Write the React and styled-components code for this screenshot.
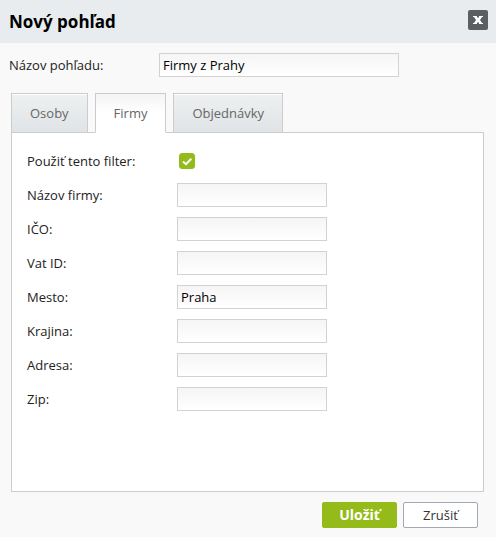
import React, { useState } from 'react';
import styled, { createGlobalStyle } from 'styled-components';

const tabs = ['Osoby', 'Firmy', 'Objednávky'];

const fields = [
    { id: 'company', label: 'Názov firmy:' },
    { id: 'ico', label: 'IČO:' },
    { id: 'vat', label: 'Vat ID:' },
    { id: 'city', label: 'Mesto:', value: 'Praha' },
    { id: 'country', label: 'Krajina:' },
    { id: 'address', label: 'Adresa:' },
    { id: 'zip', label: 'Zip:' },
];

export default function App() {
    const [active, setActive] = useState('Firmy');

    return (
        <>
            <GlobalStyle />
            <Dialog role="dialog" aria-labelledby="dialog-title">
                <Header>
                    <Title id="dialog-title">Nový pohľad</Title>
                    <CloseButton type="button" aria-label="Zrušiť">
                        <svg width="10" height="8" viewBox="0 0 10 8">
                            <path
                                d="M0 0H4V1L5 2L6 1V0H10V1H9L7 4L9 7H10V8H6V7L5 6L4 7V8H0V7H1L3 4L1 1H0Z"
                                fill="#fff"
                            />
                        </svg>
                    </CloseButton>
                </Header>

                <NameRow>
                    <Label htmlFor="name">Názov pohľadu:</Label>
                    <TextInput id="name" $width="240px" defaultValue="Firmy z Prahy" />
                </NameRow>

                <TabList role="tablist">
                    {tabs.map(tab => (
                        <Tab
                            key={tab}
                            type="button"
                            role="tab"
                            aria-selected={tab === active}
                            $active={tab === active}
                            onClick={() => setActive(tab)}
                        >
                            {tab}
                        </Tab>
                    ))}
                </TabList>

                <Panel role="tabpanel" aria-label={active}>
                    <FieldRow>
                        <Label htmlFor="use-filter">Použiť tento filter:</Label>
                        <CheckBox id="use-filter" type="checkbox" defaultChecked />
                        <CheckMark viewBox="0 0 16 16" aria-hidden="true">
                            <path d="M4 8.5L7 11.2L12.3 5.7" />
                        </CheckMark>
                    </FieldRow>
                    {fields.map(({ id, label, value }) => (
                        <FieldRow key={id}>
                            <Label htmlFor={id}>{label}</Label>
                            <TextInput id={id} $width="150px" defaultValue={value} />
                        </FieldRow>
                    ))}
                </Panel>

                <Footer>
                    <ActionButton type="submit" $primary>Uložiť</ActionButton>
                    <ActionButton type="button">Zrušiť</ActionButton>
                </Footer>
            </Dialog>
        </>
    );
}

const GlobalStyle = createGlobalStyle`
    * {
        box-sizing: border-box;
    }
    body {
        margin: 0;
        background: #f9f9f9;
        color: #222;
        font-family: 'Open Sans', sans-serif;
        font-size: 13px;
        line-height: 18px;
    }
    button, input {
        font: inherit;
    }
`;

const Dialog = styled.form`
    display: flex;
    flex-direction: column;
`;

const Header = styled.header`
    display: flex;
    align-items: center;
    justify-content: space-between;
    padding: 10px 8px 9px 9px;
    background: #e8ecef;
`;

const Title = styled.h1`
    margin: 0;
    color: #000;
    font-size: 17px;
    line-height: 24px;
`;

const CloseButton = styled.button`
    display: flex;
    align-items: center;
    justify-content: center;
    align-self: flex-start;
    width: 20px;
    height: 20px;
    padding: 0;
    border: 0;
    border-radius: 2px;
    background: #5b5f62;
    cursor: pointer;
`;

const NameRow = styled.div`
    display: grid;
    grid-template-columns: 150px 1fr;
    align-items: center;
    padding: 10px 9px 16px;
`;

const Label = styled.label`
    white-space: nowrap;
`;

const TextInput = styled.input`
    width: ${({ $width }) => $width};
    height: 24px;
    padding: 0 3px;
    border: 1px solid #d2d2d2;
    border-radius: 0;
    background: linear-gradient(#f5f5f5, #fff);
    color: #000;
`;

const TabList = styled.div`
    display: flex;
    gap: 7px;
    padding: 0 11px;
`;

const Tab = styled.button`
    position: relative;
    height: 40px;
    margin-bottom: -1px;
    padding: 0 18px;
    border: 1px solid #ccc;
    border-bottom-color: ${({ $active }) => ($active ? '#fff' : '#ccc')};
    background: ${({ $active }) =>
        $active ? 'linear-gradient(#f4f4f4, #fff 50%)' : 'linear-gradient(#eef0f1, #e0e4e6)'};
    box-shadow: ${({ $active }) => ($active ? 'none' : 'inset 0 1px #fff')};
    color: #666;
    cursor: pointer;
`;

const Panel = styled.section`
    display: flex;
    flex-direction: column;
    gap: 10px;
    min-height: 360px;
    margin: 0 12px 0 11px;
    padding: 16px 15px;
    border: 1px solid #ccc;
    background: #fff;
`;

const FieldRow = styled.div`
    display: grid;
    grid-template-columns: 150px 1fr;
    align-items: center;
    min-height: 24px;
`;

const CheckBox = styled.input`
    grid-area: 1 / 2;
    appearance: none;
    width: 16px;
    height: 16px;
    margin: 0 2px;
    border: 1px solid #d2d2d2;
    border-radius: 3px;
    cursor: pointer;

    &:checked {
        border-color: #95bb1a;
        background: #95bb1a;
    }
`;

const CheckMark = styled.svg`
    grid-area: 1 / 2;
    width: 16px;
    height: 16px;
    margin: 0 2px;
    fill: none;
    stroke: #fff;
    stroke-width: 2;
    pointer-events: none;
`;

const Footer = styled.footer`
    display: flex;
    justify-content: flex-end;
    gap: 6px;
    padding: 10px 18px 9px;
`;

const ActionButton = styled.button`
    width: 75px;
    height: 26px;
    padding: 0;
    border: 1px solid ${({ $primary }) => ($primary ? '#95bb1a' : '#a3a8b5')};
    border-radius: 2px;
    background: ${({ $primary }) => ($primary ? '#95bb1a' : '#fff')};
    color: ${({ $primary }) => ($primary ? '#fff' : '#333')};
    font-size: ${({ $primary }) => ($primary ? '14px' : '13px')};
    font-weight: ${({ $primary }) => ($primary ? 'bold' : 'normal')};
    cursor: pointer;
`;
